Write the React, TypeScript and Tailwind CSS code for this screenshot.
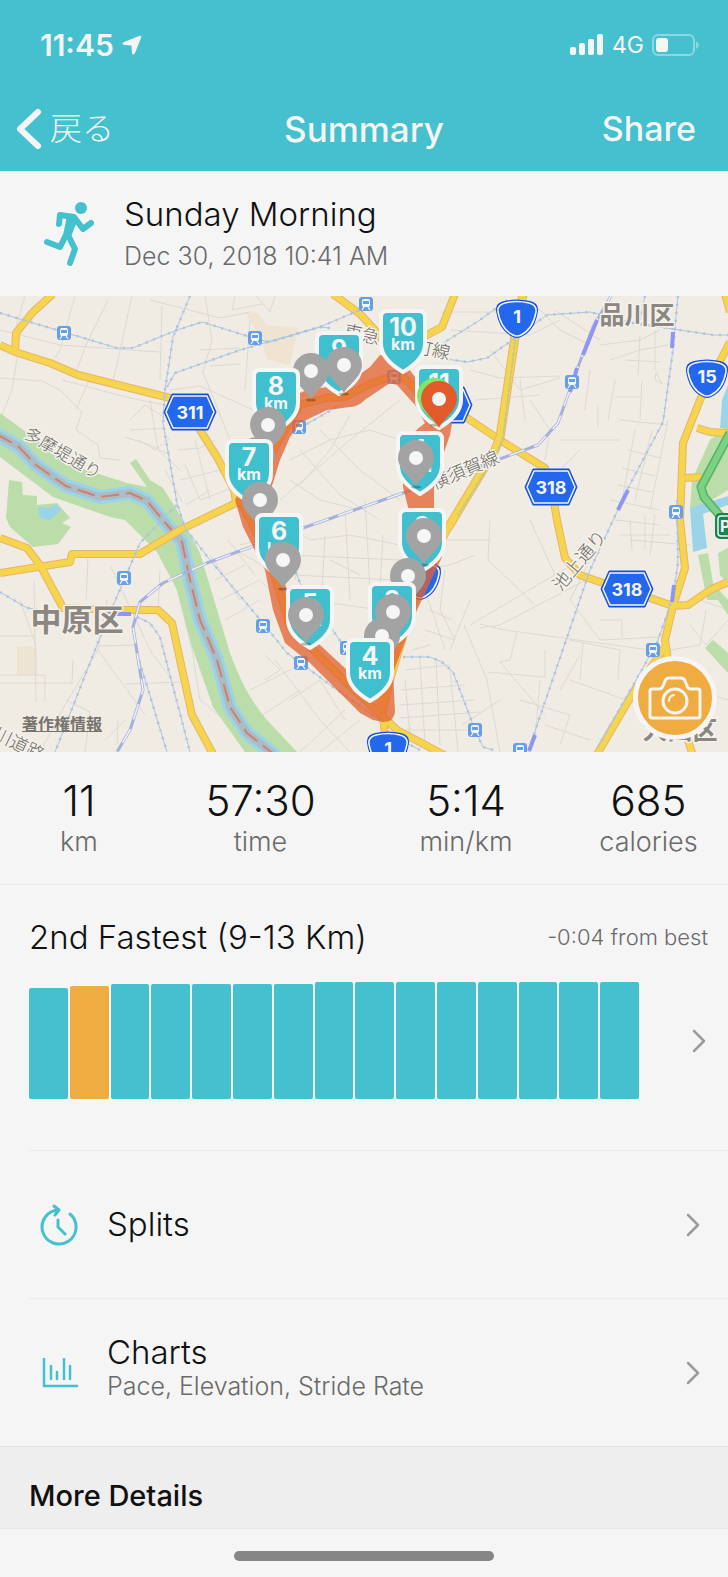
import type { ReactNode } from 'react'

const stats = [
  { value: '11', label: 'km' },
  { value: '57:30', label: 'time' },
  { value: '5:14', label: 'min/km' },
  { value: '685', label: 'calories' },
]

const runs = [111, 113, 115, 115, 115, 115, 115, 117, 117, 117, 117, 117, 117, 117, 117]
const currentRun = 1

const minorRoads = [
  'M25 296L15 330M75 296L60 350L52 362M108 300L86 345L76 372M132 296L118 360L112 385M162 306L160 380M0 330L60 345L160 352M0 378L42 381L60 390L82 412L76 430L98 445L100 458L120 460',
  'M18 352L12 390L0 420M62 380L130 398L165 405M90 378L76 410M150 300L220 318L250 312M205 296L212 340L203 372L230 440M235 296L232 310L262 304M256 296L270 312L275 296',
  'M200 350L240 348M210 366L240 364M170 390L200 386L258 412M250 320L245 390M130 430L165 428M130 420L145 405L165 418M138 440L155 450L170 438M150 400L158 450L180 470M125 437L150 445L170 455',
  'M178 450L200 448L215 440M185 465L200 500L240 485M180 480L220 470M195 440L210 500M165 470L182 502M200 520L235 508M186 505L210 490M290 460L330 440L370 430L400 440M300 450L340 495L380 520M320 430L360 470L400 500M350 415L330 450L300 485',
  'M290 480L320 500L360 510M280 520L310 540L350 535L400 545M300 535L295 580M325 535L322 590M345 510L350 600M365 500L370 590M290 555L400 560M295 575L395 580M310 600L380 610M280 500L350 440L400 400M383 535L380 590M330 560L360 575',
  'M215 580L245 565M220 600L260 580L270 590M228 540L255 575M210 555L240 600M235 550L268 568M240 545L260 540M225 620L260 600M265 655L280 670L265 680M275 660L320 720L350 752M250 690L300 665M290 700L320 680L345 720M240 730L300 690M300 752L345 710M320 752L360 720',
  'M20 600L36 646M34 580L36 702M0 636L36 636M0 683L72 683L73 660M88 556L86 600M107 600L98 650L68 700L40 752M98 646L138 645M98 650L145 715M125 684L180 682M0 675L45 675L45 702M110 565L150 650L172 680M160 570L158 610M170 560L192 650L200 700L225 720M125 720L105 740M118 720L117 745M66 700L90 712L85 752',
  'M440 312L500 312M450 330L530 335L560 320M490 350L520 390L560 378M470 370L500 378L560 376M475 400L540 395M530 400L550 430L545 460M520 380L525 420M560 440L620 440M580 450L560 470M555 310L600 340M530 300L560 330L590 345M600 345L640 340L660 330M640 335L638 375M655 330L655 370M625 360L660 362',
  'M610 360L640 350L668 345M590 370L585 410M615 380L608 420M598 428L598 405M615 397L642 397M642 380L640 420M620 420L668 425M635 430L622 500M652 430L635 500M668 420L650 510M628 450L660 458M622 468L655 476M618 485L652 492M610 500L660 510M656 372L662 384L655 380Z',
  'M615 520L660 525M620 535L670 535M630 520L632 550M645 515L645 550M655 515L650 555M440 540L490 540M490 520L488 560L535 605M530 520L555 575M470 625L580 560M480 628L500 625L590 578M464 625L487 680L500 752M480 624L505 630L650 650',
  'M517 632L510 660L500 662M500 662L545 715M487 672L545 677L545 650M570 640L620 650L618 680M580 655L560 690M583 643L580 680M540 680L535 740M520 700L570 715L560 745M570 680L640 705M545 725L590 740M600 620L622 620L622 637M600 640L660 637M590 560L570 600L600 640M670 650L700 645L706 610',
  'M420 570L450 565L475 555M430 610L452 620M425 630L455 640M412 650L430 645M405 670L450 665M400 690L465 685M400 705L475 700M400 718L480 712M405 680L410 735M420 660L425 745M436 658L440 745M450 670L458 752M400 730L480 730M462 725L500 700M470 600L450 650M425 590L445 650M445 570L440 610L455 640M630 540L690 545M700 600L728 610M690 625L706 645L728 620M695 690L728 700',
]

const mainRoads = [
  'M0 345L15 352L50 363L78 375L170 398L190 412L200 430L217 457L234 490L236 502',
  'M15 352L16 333L33 312L53 294',
  'M333 294L360 314L373 328L390 350L404 378L425 398L440 402L467 418L503 442L545 468L552 490L557 520L565 558L580 575L603 583L650 598L673 606L688 605L710 590L728 582',
  'M455 294L442 327L427 335L402 346',
  'M448 528L425 570L408 620L390 680L382 714',
  'M404 372L370 384L345 397L325 398L300 405L285 430L262 470L238 502L180 530L140 554L72 554L70 562L0 573',
  'M0 538L27 548L40 565L63 608L123 610L158 610L172 623L192 715L214 756',
  'M240 500L268 555L282 600L290 627L310 647L347 683L380 714L397 730L446 756M380 690L385 735',
  'M730 342L700 400L683 443L680 520L685 568L673 606L665 640L668 660L688 740L693 756M665 647L633 693L596 756',
  'M697 428L710 432L728 433M685 478L702 477M725 294L730 312',
]

const dottedRails = [
  'M0 313L40 325L117 348L133 348L177 330L202 322L260 340L270 342L320 327L360 310',
  'M167 387L175 373L240 350L320 327L330 328',
  'M190 296L173 337L165 390L163 423L177 503L185 528L210 560L263 623L287 653L333 687L380 720',
  'M177 505L140 543L125 578L108 617L55 752',
  'M0 592L27 608L60 612M137 617L150 623L160 637L190 752M137 653L167 752',
  'M287 550L300 583L343 645M300 428L340 405',
  'M440 345L480 320L507 300M440 358L467 362L487 358L515 338L547 315L590 312L633 323L713 335L728 335',
  'M678 296L673 350L663 422L627 490L590 570L533 737L529 752M645 296L640 320',
  'M677 500L678 563L673 597L657 643L598 747',
  'M403 657L430 657L442 662L453 672L475 730L483 747L493 750M397 738L420 750',
]

const purpleRail =
  'M611 296L593 327L578 367L558 423L538 445L497 460L403 493L303 528L207 563L163 583L140 602L133 627L143 690L130 730L117 752'

const purpleBlocks =
  'M673 332L672 348M628 490L618 510M674 585L672 602M535 735L529 751M108 614L131 614M597 320L583 355M577 368L570 392'

const river =
  'M-4 434L18 446L36 465L66 486L100 497L130 493L147 501L168 526L182 542L190 580L200 620L217 660L230 707L247 733L276 756'

const stations = [
  [64, 333], [255, 338], [299, 427], [366, 304], [572, 382], [676, 512], [394, 377],
  [124, 578], [263, 626], [301, 663], [347, 648], [653, 650], [475, 730], [520, 750],
]

function Station({ x, y }: { x: number; y: number }) {
  return (
    <g transform={`translate(${x} ${y})`}>
      <rect x="-7" y="-7" width="14" height="14" rx="3" fill="#649fe8" />
      <rect x="-4" y="-5" width="8" height="8" rx="2" fill="#f5f5f5" />
      <rect x="-3" y="-3" width="6" height="3" fill="#649fe8" />
      <path d="M-2 3L-4 6M2 3L4 6" stroke="#f5f5f5" strokeWidth="1.3" />
    </g>
  )
}

function HexSign({ x, y, label }: { x: number; y: number; label?: string }) {
  return (
    <g transform={`translate(${x} ${y})`}>
      <path d="M-18 -18H18L26 0L18 18H-18L-26 0Z" fill="#1550dc" stroke="#1550dc" strokeLinejoin="round" />
      <path d="M-17 -16H17L24 0L17 16H-17L-24 0Z" fill="#2367ec" stroke="#f5f5f5" strokeWidth="1.5" strokeLinejoin="round" />
      {label && (
        <text y="7" textAnchor="middle" fontSize="18" fontWeight="700" fill="#f5f5f5">{label}</text>
      )}
    </g>
  )
}

function RouteSign({ x, y, label }: { x: number; y: number; label?: string }) {
  return (
    <g transform={`translate(${x} ${y})`}>
      <path d="M-13 -18Q0 -21 13 -18Q22 -16 21 -8Q18 12 4 18Q0 20 -4 18Q-18 12 -21 -8Q-22 -16 -13 -18Z" fill="#1550dc" />
      <path d="M-12 -16Q0 -19 12 -16Q20 -14 19 -7Q16 10 4 16Q0 18 -4 16Q-16 10 -19 -7Q-20 -14 -12 -16Z" fill="#2367ec" stroke="#f5f5f5" strokeWidth="1.5" />
      {label && (
        <text y="4" textAnchor="middle" fontSize="18" fontWeight="700" fill="#f5f5f5">{label}</text>
      )}
    </g>
  )
}

function KmPin({ x, y, km }: { x: number; y: number; km: string }) {
  return (
    <g transform={`translate(${x} ${y})`}>
      <path
        d="M-16 2H16Q22 2 22 8V35Q22 50 0 63Q-22 50 -22 35V8Q-22 2 -16 2Z"
        fill="#40c0cf" stroke="#f5f5f5" strokeWidth="4" strokeLinejoin="round"
      />
      <text y="27" textAnchor="middle" fontSize="25" fontWeight="700" fill="#f5f5f5">{km}</text>
      <text y="41" textAnchor="middle" fontSize="16" fontWeight="700" fill="#f5f5f5">km</text>
    </g>
  )
}

function Dot({ x, y, color = '#a3a3a3' }: { x: number; y: number; color?: string }) {
  return (
    <g transform={`translate(${x} ${y})`}>
      <ellipse cy="29" rx="5" ry="1.500" fill="#000" opacity="0.25" />
      <path d="M0 28C-4 20 -18 12 -18 0A18 18 0 1 1 18 0C18 12 4 20 0 28Z" fill={color} />
      <circle r="7" fill="#f5f5f5" />
    </g>
  )
}

function RouteMap() {
  return (
    <svg
      viewBox="0 296 728 456"
      className="block h-auto w-full font-['Inter','Noto_Sans_CJK_JP',sans-serif]"
      role="img"
      aria-label="Route map"
    >
      <rect y="296" width="728" height="456" fill="#f0ece4" />
      <path d="M245 313H258L267 325L298 328L290 365L267 360L262 340ZM17 646H30L37 649V675H17Z" fill="#efe4d2" />
      <g fill="none" stroke="#dadad2" strokeWidth="1">
        {minorRoads.map((d) => <path key={d} d={d} />)}
      </g>

      {/* parks and water */}
      <g fill="#badda9">
        <path d="M0 413L37 440L77 467L127 483L147 487L130 463L136 459L150 480L163 488L177 510L200 553L230 653Q245 695 267 720L297 752H245L213 707L192 647L177 590L157 552L125 520L110 517L53 497L0 457Z" />
        <path d="M9 480L22 482L23 495L37 496V505L57 503L70 518L62 523L71 527L58 544L33 547L10 527L6 518Z" />
        <path d="M728 425L710 440L692 480L690 510L704 505L728 490ZM698 555L708 553L713 583L728 600V615L718 600L707 600ZM718 553L728 548V584L720 575ZM713 640L728 653V673L705 648Z" />
      </g>
      <path d="M38 507L50 508L56 504L61 510L50 520L40 518ZM728 385L722 400L720 428L728 428ZM690 508L728 496V505L703 514L707 548L693 552Z" fill="#9bd4e8" />
      <path d={river} fill="none" stroke="#9bd4e8" strokeWidth="14" />
      <path d={river} fill="none" stroke="#aabcc4" strokeWidth="8" />
      <path d={river} fill="none" stroke="#cf7f70" strokeWidth="2" strokeDasharray="18 7" />

      <g fill="none" strokeLinejoin="round">
        {mainRoads.map((d) => <path key={d} d={d} stroke="#e9b26e" strokeWidth="8" />)}
        {mainRoads.map((d) => <path key={d} d={d} stroke="#f4d54c" strokeWidth="6" />)}
        <path d="M523 294L515 337L500 437L495 450L448 528" stroke="#e9b26e" strokeWidth="9" />
        <path d="M523 294L515 337L500 437L495 450L448 528" stroke="#f4d54c" strokeWidth="7" />
        <path d="M519 310L503 437L498 450L458 515" stroke="#b9c79a" strokeWidth="1.500" strokeDasharray="5 1" />
        <path d="M730 433L701 487L704 497L722 518" stroke="#56b168" strokeWidth="9" />
        <path d="M730 433L701 487L704 497L722 518" stroke="#7bd283" strokeWidth="6" />
        {dottedRails.map((d) => (
          <g key={d} stroke="#adc4e0">
            <path d={d} strokeWidth="1" />
            <path d={d} strokeWidth="2.500" strokeDasharray="2 6" />
          </g>
        ))}
        <path d={purpleRail} stroke="#a5b0dc" strokeWidth="3" />
        <path d={purpleRail} stroke="#f1f1f5" strokeWidth="1.500" strokeDasharray="16 10" />
        <path d={purpleBlocks} stroke="#8f96f2" strokeWidth="4" />
      </g>

      {stations.map(([x, y]) => <Station key={`${x}-${y}`} x={x} y={y} />)}

      <HexSign x={190} y={412} label="311" />
      <HexSign x={551} y={487} label="318" />
      <HexSign x={627} y={589} label="318" />
      <HexSign x={446} y={405} />
      <RouteSign x={517} y={319} label="1" />
      <RouteSign x={707} y={379} label="15" />
      <RouteSign x={388} y={751} label="1" />
      <RouteSign x={420} y={581} />
      <rect x="716" y="514" width="26" height="24" rx="4" fill="#178550" stroke="#178550" strokeWidth="2" />
      <rect x="718" y="516" width="26" height="20" rx="3" fill="none" stroke="#f5f5f5" strokeWidth="1.5" />
      <text x="720" y="532" fontSize="16" fontWeight="700" fill="#f5f5f5">P</text>

      {/* place and line names */}
      <g stroke="#f5f2ec" strokeWidth="3" strokeLinejoin="round" style={{ paintOrder: 'stroke' }}>
        <g fill="#8b867f" fontWeight="700">
          <text x="637" y="324" textAnchor="middle" fontSize="25">品川区</text>
          <text x="77" y="631" textAnchor="middle" fontSize="31">中原区</text>
          <text x="680" y="739" textAnchor="middle" fontSize="25">大田区</text>
        </g>
        <g fill="#6b6862">
          <text transform="translate(23 437) rotate(30)" fontSize="17">多摩堤通り</text>
          <text transform="translate(434 490) rotate(-23)" fontSize="18">横須賀線</text>
          <text transform="translate(343 337) rotate(12)" fontSize="18">東急大井町線</text>
          <text transform="translate(561 592) rotate(-50)" fontSize="18">池上通り</text>
          <text transform="translate(-8 738) rotate(26)" fontSize="18">川道路</text>
        </g>
      </g>

      <path
        d="M235 500L245 480L262 440L275 418L295 395L307 390L327 387L345 385L370 367L380 355L402 360L415 377L437 390L452 423L450 435L443 455L434 485V507L442 530V557L417 610L393 673L395 712Q394 722 383 722L373 720L360 713L310 663L285 643L273 610L265 570L243 527ZM425 423L404 440L403 487L408 507L412 530L418 560L400 600L385 650L378 700L347 670L320 645L300 636L295 620L284 580L262 510L273 483L280 460L290 437L300 423L327 410L350 407Q358 407 366 399L390 383L397 385L415 405Z"
        fill="#e2612f" fillOpacity="0.76" fillRule="evenodd"
      />

      <KmPin x={339} y={331} km="9" />
      <Dot x={311} y={371} />
      <Dot x={344} y={365} />
      <KmPin x={403} y={309} km="10" />
      <KmPin x={276} y={368} km="8" />
      <Dot x={268} y={425} />
      <Dot x={257} y={455} />
      <KmPin x={249} y={439} km="7" />
      <Dot x={260} y={500} />
      <KmPin x={279} y={513} km="6" />
      <Dot x={283} y={560} />
      <KmPin x={310} y={585} km="5" />
      <Dot x={306} y={615} />
      <KmPin x={439} y={365} km="11" />
      <Dot x={435} y={396} color="#80e66a" />
      <path transform="translate(439 399)" d="M0 29C-4 20 -18 12 -18 0A18 18 0 1 1 18 0C18 12 4 20 0 29Z" fill="#e25a29" />
      <circle cx="439" cy="399" r="7" fill="#f5f5f5" />
      <KmPin x={420} y={431} km="1" />
      <Dot x={416} y={458} />
      <KmPin x={422} y={508} km="2" />
      <Dot x={424} y={536} />
      <Dot x={408} y={576} />
      <KmPin x={392} y={582} km="3" />
      <Dot x={393} y={612} />
      <Dot x={382} y={636} />
      <KmPin x={370} y={638} km="4" />
    </svg>
  )
}

function Chevron() {
  return (
    <svg viewBox="0 0 14 24" className="h-6 w-3.5 shrink-0" fill="none" stroke="#9b9b9b" strokeWidth="2.5" strokeLinecap="round" strokeLinejoin="round" aria-hidden="true">
      <path d="M2 2L12 12L2 22" />
    </svg>
  )
}

function DetailRow({ icon, title, subtitle }: { icon: ReactNode; title: string; subtitle?: string }) {
  return (
    <button type="button" className="ml-[29px] flex h-[148px] items-center border-t border-[#eaeaea] pr-7 text-left">
      <span className="flex w-[78px] shrink-0 pl-2.5">{icon}</span>
      <span className={`flex flex-1 flex-col ${subtitle ? 'pb-2.5' : 'pb-0.5'}`}>
        <span className="text-[33px] leading-9 text-[#111]">{title}</span>
        {subtitle && <span className="text-[25px] leading-8 text-[#6a6a6a]">{subtitle}</span>}
      </span>
      <Chevron />
    </button>
  )
}

export default function App() {
  return (
    <div className="flex min-h-screen flex-col bg-[#f5f5f5] font-['Inter','Noto_Sans_CJK_JP',sans-serif] font-light text-[#111]">
      <header className="bg-[#44c0ce] text-[#f5f5f5]">
        <div className="flex h-[90px] items-center justify-between pr-7 pl-10">
          <div className="flex items-center gap-2">
            <span className="text-[30px] leading-9 font-semibold">11:45</span>
            <svg viewBox="0 0 20 20" className="size-5" fill="currentColor" aria-hidden="true">
              <path d="M17 1Q20 0 19 3L13 18Q11 21 10 18L9.500 10.500L2 10Q-1 9 2 7Z" />
            </svg>
          </div>
          <div className="flex items-center gap-2">
            <svg viewBox="0 0 34 22" className="h-[22px] w-[34px]" fill="currentColor" aria-hidden="true">
              <rect y="13" width="6" height="8" rx="2" />
              <rect x="9" y="9" width="6" height="12" rx="2" />
              <rect x="18" y="5" width="6" height="16" rx="2" />
              <rect x="27" width="6" height="21" rx="2" />
            </svg>
            <span className="text-[23px] leading-8 font-normal">4G</span>
            <svg viewBox="0 0 48 22" className="h-[22px] w-12" fill="none" aria-hidden="true">
              <rect x="1" y="1" width="41" height="20" rx="5" stroke="#8dd7df" strokeWidth="2" />
              <rect x="4" y="4" width="12" height="14" rx="3" fill="#f5f5f5" />
              <path d="M44 7Q50 11 44 15Z" fill="#8dd7df" />
            </svg>
          </div>
        </div>
        <nav className="grid h-[81px] grid-cols-[1fr_auto_1fr] items-center px-4 pb-1">
          <button type="button" className="flex items-center gap-2 justify-self-start text-[32px] leading-10 font-light">
            <svg viewBox="0 0 26 42" className="h-[42px] w-[26px]" fill="none" stroke="currentColor" strokeWidth="6" strokeLinecap="round" strokeLinejoin="round" aria-hidden="true">
              <path d="M22 4L4 21L22 38" />
            </svg>
            戻る
          </button>
          <h1 className="text-[35px] leading-10 font-medium">Summary</h1>
          <button type="button" className="justify-self-end pr-4 text-[34px] leading-10 font-medium">Share</button>
        </nav>
      </header>

      <section className="flex h-[125px] items-center">
        <svg viewBox="0 0 50 64" className="ml-11 h-16 w-[50px] shrink-0" fill="none" stroke="#44c0ce" strokeWidth="6" strokeLinecap="round" strokeLinejoin="round" aria-hidden="true">
          <circle cx="37" cy="6" r="6" fill="#44c0ce" stroke="none" />
          <path d="M15 22L16 13L30 15L39 27L47 21M3 40L16 45L23 31M24 33L31 47L26 61" />
          <path d="M24 16L32 18L26 33L21 31Z" fill="#44c0ce" strokeWidth="3" />
        </svg>
        <div className="ml-[30px]">
          <h2 className="text-[33px] leading-10">Sunday Morning</h2>
          <p className="mt-1 text-[25px] leading-9 text-[#6a6a6a]">Dec 30, 2018 10:41 AM</p>
        </div>
      </section>

      <section className="relative">
        <RouteMap />
        <a href="#copyright" className="absolute bottom-4 left-[22px] text-[16px] leading-6 font-bold text-[#77736c] underline">
          著作権情報
        </a>
        <button
          type="button"
          aria-label="Add photo"
          className="absolute right-[11px] bottom-3 flex size-[84px] items-center justify-center rounded-full border-[5px] border-[#f5f5f5] bg-[#efac40]"
        >
          <svg viewBox="0 0 54 44" className="h-11 w-[54px]" fill="none" stroke="#f5f5f5" strokeWidth="3" strokeLinejoin="round" strokeLinecap="round" aria-hidden="true">
            <path d="M4 13H11Q14 13 15 10L17 5Q18 2 21 2H33Q36 2 37 5L39 10Q40 13 43 13H50Q52 13 52 15V40Q52 42 50 42H4Q2 42 2 40V15Q2 13 4 13Z" />
            <circle cx="27" cy="25" r="12" />
            <path d="M21 25Q21 20 26 19" strokeWidth="2" />
          </svg>
        </button>
      </section>

      <dl className="grid h-[133px] grid-cols-[158fr_205fr_206fr_159fr] border-b border-[#eaeaea] pt-6">
        {stats.map((stat) => (
          <div key={stat.label} className="flex flex-col-reverse justify-end text-center">
            <dt className="text-[27px] leading-8 text-[#6a6a6a]">{stat.label}</dt>
            <dd className="text-[42px] leading-[50px]">{stat.value}</dd>
          </div>
        ))}
      </dl>

      <section className="flex h-[265px] flex-col pt-8">
        <div className="flex items-center justify-between pr-5 pl-[29px]">
          <h2 className="text-[33px] leading-10">2nd Fastest (9-13 Km)</h2>
          <p className="text-[22px] leading-8 text-[#6a6a6a]">-0:04 from best</p>
        </div>
        <button type="button" aria-label="Compare runs" className="mt-[25px] flex items-center justify-between pr-[22px] pl-[29px]">
          <span className="mr-[53px] flex h-[117px] flex-1 items-end gap-[2px]">
            {runs.map((height, index) => (
              <span
                key={index}
                className={`flex-1 rounded-[2px] ${index === currentRun ? 'bg-[#efac40]' : 'bg-[#44c0ce]'}`}
                style={{ height }}
              />
            ))}
          </span>
          <Chevron />
        </button>
      </section>

      <DetailRow
        title="Splits"
        icon={
          <svg viewBox="0 0 40 42" className="h-[42px] w-10" fill="none" stroke="#44c0ce" strokeWidth="3" strokeLinecap="round" strokeLinejoin="round" aria-hidden="true">
            <path d="M31 10A17 17 0 1 1 20 6M15 2L20 6L16 11M19 16V23L26 30" />
          </svg>
        }
      />
      <DetailRow
        title="Charts"
        subtitle="Pace, Elevation, Stride Rate"
        icon={
          <svg viewBox="0 0 40 30" className="h-[30px] w-10" fill="none" stroke="#44c0ce" strokeWidth="2.500" strokeLinecap="round" strokeLinejoin="round" aria-hidden="true">
            <path d="M5 1V28H38M12 8V21M18 14V21M25 1V21M31 8V21" />
          </svg>
        }
      />

      <h2 className="flex h-[83px] items-center border-y border-[#e6e6e6] bg-[#eee] pt-4 pl-[29px] text-[29px] leading-9 font-medium">
        More Details
      </h2>
      <div className="flex justify-center pt-[22px] pb-4">
        <div className="h-[10px] w-[260px] rounded-full bg-[#868686]" />
      </div>
    </div>
  )
}
